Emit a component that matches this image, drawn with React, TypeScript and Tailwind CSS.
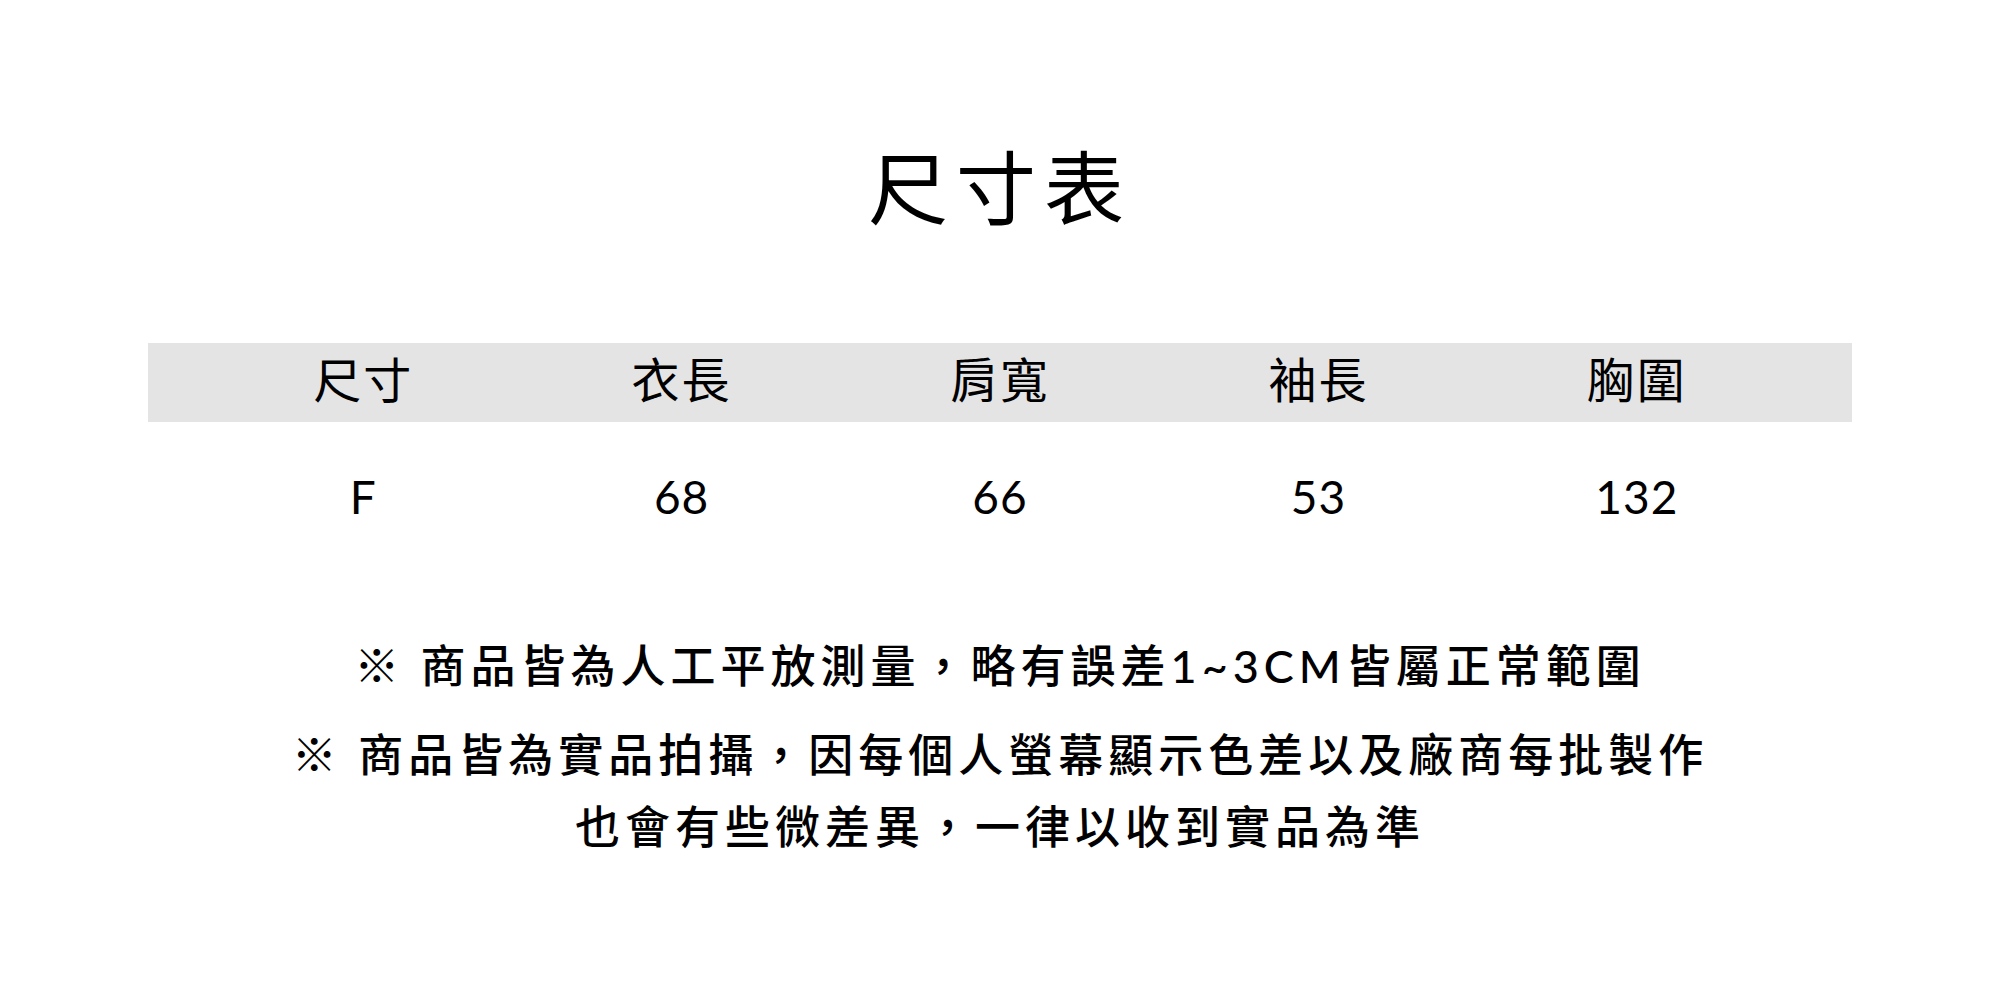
const cols = [
  { label: "尺寸", value: "F" },
  { label: "衣長", value: "68" },
  { label: "肩寬", value: "66" },
  { label: "袖長", value: "53" },
  { label: "胸圍", value: "132" },
];

const font = "font-['Lato','Noto_Sans_CJK_TC',sans-serif]";

export default function App() {
  return (
    <div className={`w-[2000px] h-[1000px] bg-white text-black ${font}`}>
      <h1 className="pt-[143px] h-[343px] text-center text-[80px] leading-[80px] tracking-[8px] font-['Noto_Sans_CJK_TC',sans-serif] font-normal">
        尺寸表
      </h1>

      <div className="mx-[148px]">
        <div className="bg-[#e4e4e4] h-[79px] pb-[12px] px-[56px] grid grid-cols-5 items-center">
          {cols.map((c) => (
            <div
              key={c.label}
              className="text-center text-[48px] leading-none tracking-[2px] font-['Noto_Sans_CJK_TC',sans-serif]"
            >
              {c.label}
            </div>
          ))}
        </div>
        <div className="h-[150px] px-[56px] grid grid-cols-5 items-center">
          {cols.map((c) => (
            <div
              key={c.label}
              className="text-center text-[46px] leading-none tracking-[1px]"
            >
              {c.value}
            </div>
          ))}
        </div>
      </div>

      <div className="mt-[58px] flex flex-col items-center gap-[17px] text-[45px] leading-[72px] tracking-[5px] font-medium">
        <p>※ 商品皆為人工平放測量，略有誤差1~3CM皆屬正常範圍</p>
        <p className="text-center">
          ※ 商品皆為實品拍攝，因每個人螢幕顯示色差以及廠商每批製作
          <br />
          也會有些微差異，一律以收到實品為準
        </p>
      </div>
    </div>
  );
}
